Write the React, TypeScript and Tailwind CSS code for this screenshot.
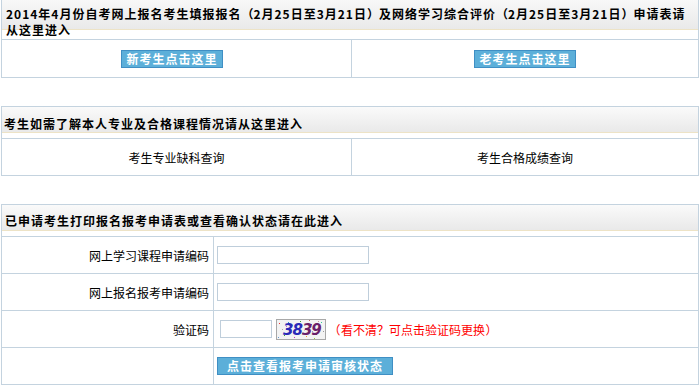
const hdrGrad =
  "bg-[linear-gradient(to_bottom,#fafafa_0px,#e9e9e9_25px,#ede3c6_25px,#ede3c6_26px,#ffffff_26px)]";

function BlueButton({ children, className = "" }: { children: React.ReactNode; className?: string }) {
  return (
    <button
      type="button"
      className={
        "h-[18px] border border-[#3f8fc4] bg-[#5cafd9] px-[4px] text-[12px] leading-[16px] font-bold tracking-[1px] text-white whitespace-nowrap " +
        className
      }
    >
      {children}
    </button>
  );
}

function PO() {
  return <span className="inline-block w-[12px] text-center tracking-normal">（</span>;
}
function PC() {
  return <span className="inline-block w-[12px] text-center tracking-normal">）</span>;
}

function Captcha() {
  const dots = [
    [3, 4, "#e33"], [8, 16, "#3a3"], [12, 3, "#39c"], [18, 18, "#c3c"], [24, 2, "#393"],
    [30, 17, "#e93"], [35, 5, "#33c"], [40, 15, "#c33"], [45, 3, "#3c9"], [47, 12, "#999"],
    [6, 10, "#aaa"], [21, 9, "#bbb"], [28, 11, "#ccc"], [43, 8, "#aaa"], [15, 13, "#c9c"],
    [38, 19, "#9c3"], [2, 18, "#69c"], [33, 1, "#c66"], [10, 7, "#c6c"], [26, 14, "#6c6"],
    [36, 12, "#99c"], [42, 2, "#c99"], [16, 6, "#9cc"],
  ] as const;
  return (
    <svg width="50" height="21" viewBox="0 0 50 21" className="block">
      <rect x="0.5" y="0.5" width="49" height="20" fill="#f3f3f3" stroke="#a8a8a8" />
      {dots.map(([x, y, c], i) => (
        <rect key={i} x={x} y={y} width="1" height="1" fill={c} />
      ))}
      <text
        x="7"
        y="16"
        fontFamily="'DejaVu Sans', sans-serif"
        fontWeight="bold"
        fontStyle="italic"
        fontSize="15"
        fill="#2a2ab8"
        letterSpacing="-1"
      >
        38
        <tspan fill="#6a1f6a">39</tspan>
      </text>
    </svg>
  );
}

export default function App() {
  const bc = "border-[#c4d3df]";
  return (
    <div className="w-[700px] h-[388px] overflow-hidden bg-white text-[12px] leading-[15px] text-black font-['Noto_Sans_CJK_SC','Noto_Sans',sans-serif]">
      <div className="ml-[1px] w-[698px]">
        {/* Section 1 */}
        <div className={"border-x border-b " + bc}>
          <div
            className={
              "h-[40px] border-b pt-[6px] pl-[4px] leading-[16px] font-bold tracking-[1px] whitespace-nowrap " +
              bc +
              " bg-[linear-gradient(to_bottom,#f8f8f8_0px,#e9e9e9_29px,#ede3c6_29px,#ede3c6_30px,#ffffff_30px)]"
            }
          >
            2014年4月份自考网上报名考生填报报名<PO />2月25日至3月21日<PC />及网络学习综合评价<PO />2月25日至3月21日<PC />申请表请
            <br />
            从这里进入
          </div>
          <div className="grid h-[37px] grid-cols-[350px_1fr]">
            <div className={"flex items-center justify-center border-r pr-[9px] " + bc}>
              <BlueButton>新考生点击这里</BlueButton>
            </div>
            <div className="flex items-center justify-center">
              <BlueButton>老考生点击这里</BlueButton>
            </div>
          </div>
        </div>

        {/* Section 2 */}
        <div className={"mt-[28px] border " + bc}>
          <div
            className={
              "flex h-[32px] items-center border-b pl-[2px] pt-[1px] font-bold tracking-[1px] whitespace-nowrap " +
              bc +
              " " +
              hdrGrad
            }
          >
            考生如需了解本人专业及合格课程情况请从这里进入
          </div>
          <div className="grid h-[36px] grid-cols-[350px_1fr]">
            <div className={"flex items-center justify-center border-r " + bc}>考生专业缺科查询</div>
            <div className="flex items-center justify-center">考生合格成绩查询</div>
          </div>
        </div>

        {/* Section 3 */}
        <div className={"mt-[28px] border " + bc}>
          <div
            className={
              "flex h-[32px] items-center border-b pl-[3px] font-bold tracking-[1px] whitespace-nowrap " +
              bc +
              " " +
              hdrGrad
            }
          >
            已申请考生打印报名报考申请表或查看确认状态请在此进入
          </div>

          <div className={"grid h-[37px] grid-cols-[212px_1fr] border-b " + bc}>
            <div className={"flex items-center justify-end border-r pr-[4px] " + bc}>网上学习课程申请编码</div>
            <div className="flex items-center pl-[3px]">
              <input className="h-[18px] w-[152px] border border-[#bfcedb] bg-white outline-none" />
            </div>
          </div>

          <div className={"grid h-[37px] grid-cols-[212px_1fr] border-b " + bc}>
            <div className={"flex items-center justify-end border-r pr-[4px] " + bc}>网上报名报考申请编码</div>
            <div className="flex items-center pl-[3px]">
              <input className="h-[18px] w-[152px] border border-[#bfcedb] bg-white outline-none" />
            </div>
          </div>

          <div className={"grid h-[37px] grid-cols-[212px_1fr] border-b " + bc}>
            <div className={"flex items-center justify-end border-r pr-[4px] " + bc}>验证码</div>
            <div className="flex items-center pl-[6px]">
              <input className="h-[18px] w-[52px] border border-[#bfcedb] bg-white outline-none" />
              <div className="ml-[4px]">
                <Captcha />
              </div>
              <span className="ml-[2px] text-[#ff0000] whitespace-nowrap">
                <span className="inline-block w-[13px] text-center">（</span>看不清？可点击验证码更换<span className="inline-block w-[13px] text-center">）</span>
              </span>
            </div>
          </div>

          <div className="grid h-[36px] grid-cols-[212px_1fr]">
            <div className={"border-r " + bc}></div>
            <div className="flex items-center pl-[3px]">
              <BlueButton className="w-[176px]">点击查看报考申请审核状态</BlueButton>
            </div>
          </div>
        </div>
      </div>
    </div>
  );
}
